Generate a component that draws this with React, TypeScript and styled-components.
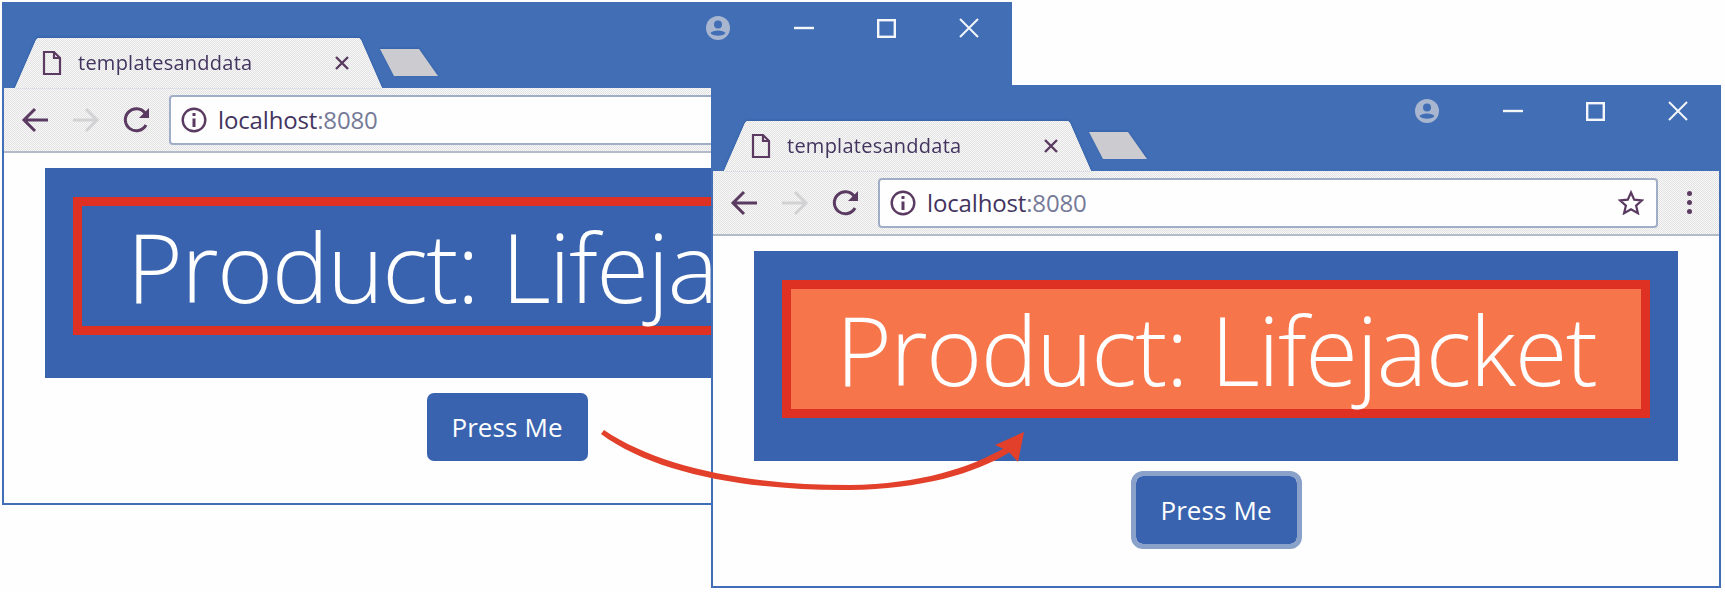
import React from "react";
import styled, { createGlobalStyle, css } from "styled-components";

const Global = createGlobalStyle`
  html, body { margin: 0; padding: 0; background: #fff; }
  #root { width: 1725px; height: 592px; overflow: hidden; }
`;

const ditheredGrey = css`
  background-color: #eeeeee;
  background-image: conic-gradient(#f8f8f8 25%, #e2e2e2 0 50%, #f8f8f8 0 75%, #e2e2e2 0);
  background-size: 2px 2px;
`;

const Desk = styled.div`
  position: relative;
  width: 1725px;
  height: 592px;
  background: #fefefe;
  overflow: hidden;
`;

const Frame = styled.section<{ $x: number; $y: number }>`
  position: absolute;
  left: ${(p) => p.$x}px;
  top: ${(p) => p.$y}px;
  width: 1010px;
  height: 503px;
  box-sizing: border-box;
  display: flex;
  flex-direction: column;
  background: #fefefe;
  border: 2px solid #416eb6;
  border-top: 0;
  font-family: "Open Sans", "Liberation Sans", sans-serif;
`;

const TitleBar = styled.header`
  height: 86px;
  flex: none;
  background: #416eb5;
  display: flex;
  align-items: flex-end;
  justify-content: space-between;
  margin: 0 -2px;
  padding-left: 13px;
  position: relative;
`;

const TabGroup = styled.div`
  display: flex;
  align-items: flex-end;
  filter: drop-shadow(0 -1px 1px #3561a8);
`;

const Tab = styled.div`
  ${ditheredGrey};
  width: 367px;
  height: 50px;
  box-sizing: border-box;
  clip-path: polygon(0 100%, 21px 2px, 23px 0, 344px 0, 346px 2px, 100% 100%);
  display: flex;
  align-items: center;
  padding: 0 0 0 27px;
  color: #43345f;
`;

const TabTitle = styled.span`
  font-size: 20px;
  line-height: 24px;
  margin-left: 16px;
  width: 256px;
  letter-spacing: 0.25px;
`;

const NewTab = styled.div`
  width: 58px;
  height: 27px;
  margin: 0 0 12px -2px;
  background: #cbcbd0;
  clip-path: polygon(0 0, 39px 0, 100% 100%, 14px 100%);
`;

const WindowControls = styled.div`
  align-self: flex-start;
  display: flex;
  align-items: center;
  height: 20px;
  margin-top: 16px;
  padding-right: 33px;
`;

const ControlSlot = styled.span<{ $w: number }>`
  width: ${(p) => p.$w}px;
  height: 24px;
  display: flex;
  align-items: center;
  justify-content: center;
`;

const Toolbar = styled.nav`
  ${ditheredGrey};
  height: 65px;
  flex: none;
  box-sizing: border-box;
  border-bottom: 2px solid #b3bac8;
  display: flex;
  align-items: center;
`;

const NavButton = styled.span<{ $w: number }>`
  width: ${(p) => p.$w}px;
  display: flex;
  justify-content: center;
  flex: none;
`;

const AddressBar = styled.div`
  width: 780px;
  height: 50px;
  margin-left: 1px;
  box-sizing: border-box;
  flex: none;
  background: #fefefe;
  border: 2px solid #9fadc6;
  border-radius: 4px;
  display: flex;
  align-items: center;
  padding: 0 12px 0 10px;
`;

const Url = styled.span`
  flex: 1;
  margin-left: 11px;
  font-size: 24px;
  color: #43345f;
  letter-spacing: -0.15px;
`;

const Port = styled.span`
  color: #757a98;
`;

const Menu = styled.span`
  display: flex;
  flex-direction: column;
  gap: 4px;
  margin-left: 29px;
`;

const MenuDot = styled.i`
  display: block;
  width: 5px;
  height: 5px;
  border-radius: 50%;
  background: #5a3a60;
`;

const Content = styled.main`
  flex: 1;
  display: flex;
  flex-direction: column;
  align-items: center;
  padding-top: 15px;
`;

const Panel = styled.div`
  width: 924px;
  height: 210px;
  box-sizing: border-box;
  padding: 29px 28px 43px;
  background: #3963af;
`;

const Banner = styled.div<{ $lit: boolean }>`
  height: 100%;
  box-sizing: border-box;
  border: 9px solid #de3124;
  background: ${(p) => (p.$lit ? "#f6754b" : "transparent")};
  display: flex;
  justify-content: center;
  align-items: center;
  color: #fefefe;
  font-family: "Open Sans", sans-serif;
  font-weight: 300;
  font-size: 96px;
  letter-spacing: -1.6px;
  line-height: 120px;
  white-space: nowrap;
  overflow: visible;
`;

const ButtonRow = styled.div`
  margin-top: 15px;
`;

const PressButton = styled.button<{ $focus: boolean }>`
  width: 161px;
  height: 68px;
  box-sizing: border-box;
  background: #3963af;
  color: #fefefe;
  border: 0;
  border-radius: 7px;
  font-family: "Open Sans", sans-serif;
  font-size: 26px;
  letter-spacing: 0.1px;
  padding: 0;
  outline: ${(p) => (p.$focus ? "5px solid #8aa1c9" : "none")};
  outline-offset: 0;
`;

const ArrowLayer = styled.svg`
  position: absolute;
  left: 0;
  top: 0;
  pointer-events: none;
`;

const ink = "#5a3a60";

const DocIcon = () => (
  <svg width="20" height="26" viewBox="0 0 20 26" fill="none" stroke={ink} strokeWidth="2.2">
    <path d="M2 2h10l6 6v16H2z" />
    <path d="M12 2v6h6" />
  </svg>
);
const CloseTabIcon = () => (
  <svg width="16" height="16" viewBox="0 0 16 16" stroke={ink} strokeWidth="2.4">
    <path d="M2 2l12 12M14 2L2 14" />
  </svg>
);
const ArrowIcon = ({ flip, color }: { flip?: boolean; color: string }) => (
  <svg width="28" height="26" viewBox="0 0 28 26" fill="none" stroke={color} strokeWidth="3" style={flip ? { transform: "scaleX(-1)" } : undefined}>
    <path d="M27 13H3M14 2L3 13l11 11" />
  </svg>
);
const ReloadIcon = () => (
  <svg width="28" height="28" viewBox="0 0 28 28" fill="none" stroke={ink} strokeWidth="3">
    <path d="M23 19a11 11 0 1 1-1-12" />
    <path d="M26 2v10H16z" fill={ink} stroke="none" />
  </svg>
);
const InfoIcon = () => (
  <svg width="26" height="26" viewBox="0 0 26 26" fill="none" stroke={ink} strokeWidth="2.4">
    <circle cx="13" cy="13" r="11.3" />
    <path d="M13 11.5V20M13 6v3" strokeWidth="3" />
  </svg>
);
const StarIcon = () => (
  <svg width="26" height="25" viewBox="0 0 26 25" fill="none" stroke={ink} strokeWidth="2.2">
    <path d="M13 2.5l3.2 7.2 7.8.7-5.9 5.2 1.8 7.6L13 19.2l-6.9 4 1.8-7.6L2 10.4l7.8-.7z" />
  </svg>
);
const ProfileIcon = () => (
  <svg width="24" height="24" viewBox="0 0 24 24">
    <circle cx="12" cy="12" r="12" fill="#a8b6cf" />
    <circle cx="12" cy="8.5" r="4" fill="#416eb5" />
    <path d="M4.5 17c2-3.5 13-3.5 15 0-2 3.6-13 3.6-15 0z" fill="#416eb5" />
  </svg>
);
const MinimizeIcon = () => (
  <svg width="20" height="4" viewBox="0 0 20 4" stroke="#f4f6fa" strokeWidth="2.4">
    <path d="M0 2h20" />
  </svg>
);
const MaximizeIcon = () => (
  <svg width="19" height="19" viewBox="0 0 19 19" fill="none" stroke="#f4f6fa" strokeWidth="2.4">
    <rect x="1.2" y="1.2" width="16.6" height="16.6" />
  </svg>
);
const CloseIcon = () => (
  <svg width="20" height="20" viewBox="0 0 20 20" stroke="#f4f6fa" strokeWidth="2">
    <path d="M1 1l18 18M19 1L1 19" />
  </svg>
);

const Browser = ({ x, y, active }: { x: number; y: number; active: boolean }) => (
  <Frame $x={x} $y={y}>
    <TitleBar>
      <TabGroup>
        <Tab>
          <DocIcon />
          <TabTitle>templatesanddata</TabTitle>
          <CloseTabIcon />
        </Tab>
        <NewTab />
      </TabGroup>
      <WindowControls>
        <ControlSlot $w={24}>
          <ProfileIcon />
        </ControlSlot>
        <ControlSlot $w={64} />
        <ControlSlot $w={20}>
          <MinimizeIcon />
        </ControlSlot>
        <ControlSlot $w={63} />
        <ControlSlot $w={19}>
          <MaximizeIcon />
        </ControlSlot>
        <ControlSlot $w={63} />
        <ControlSlot $w={20}>
          <CloseIcon />
        </ControlSlot>
      </WindowControls>
    </TitleBar>
    <Toolbar>
      <NavButton $w={62}>
        <ArrowIcon color={ink} />
      </NavButton>
      <NavButton $w={40}>
        <ArrowIcon flip color="#d2d2d4" />
      </NavButton>
      <NavButton $w={62}>
        <ReloadIcon />
      </NavButton>
      <AddressBar>
        <InfoIcon />
        <Url>
          localhost<Port>:8080</Port>
        </Url>
        <StarIcon />
      </AddressBar>
      <Menu>
        <MenuDot />
        <MenuDot />
        <MenuDot />
      </Menu>
    </Toolbar>
    <Content>
      <Panel>
        <Banner $lit={active}>Product: Lifejacket</Banner>
      </Panel>
      <ButtonRow>
        <PressButton $focus={active}>Press Me</PressButton>
      </ButtonRow>
    </Content>
  </Frame>
);

export default function App() {
  return (
    <Desk>
      <Global />
      <Browser x={2} y={2} active={false} />
      <Browser x={711} y={85} active={true} />
      <ArrowLayer width="1725" height="592" viewBox="0 0 1725 592">
        <path
          d="M601 434 L604 430 C660 468 750 485 850 485 C920 484 970 468 1006 447 L1010 452 C975 474 920 489 850 490 C750 491 655 474 601 434 Z"
          fill="#e2402a"
        />
        <path d="M1024 432 L1018 462 L1008 451 L995 445 Z" fill="#e2402a" />
      </ArrowLayer>
    </Desk>
  );
}
